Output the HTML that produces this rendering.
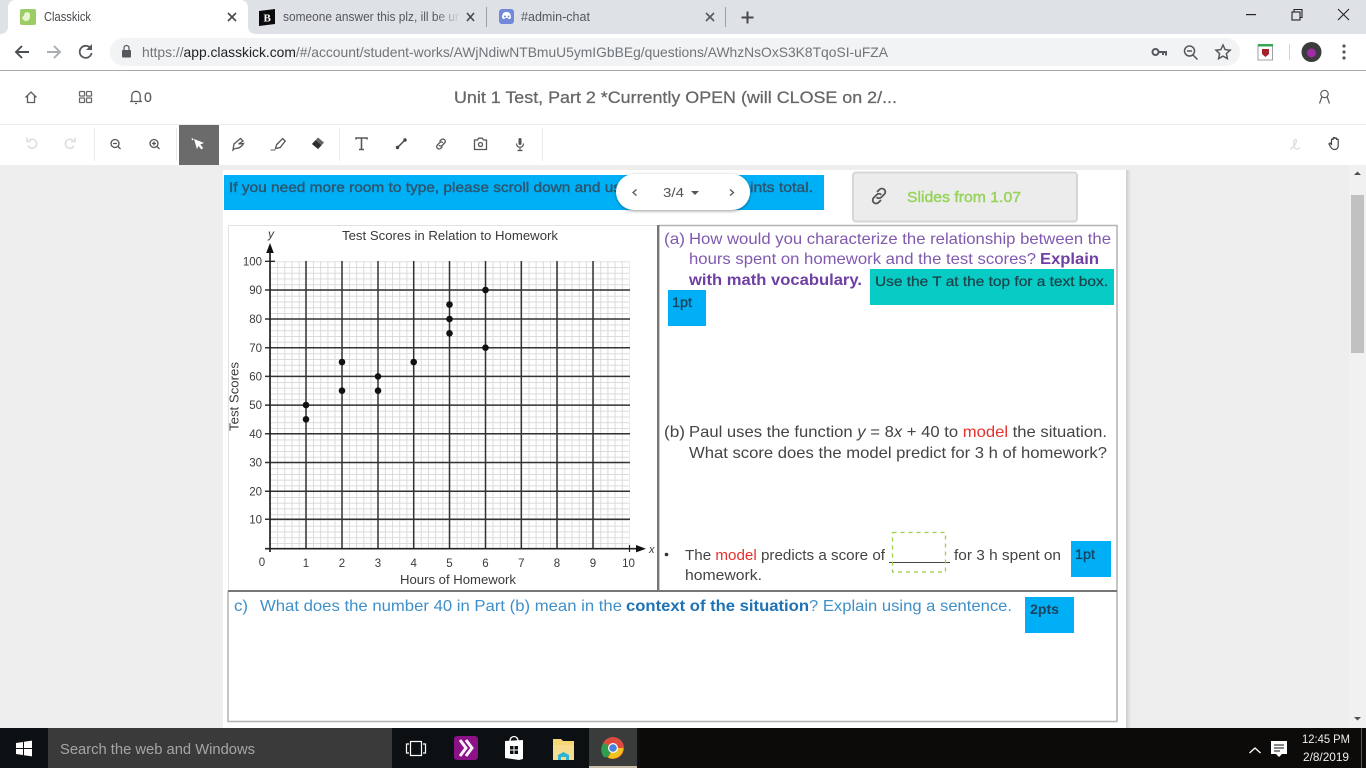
<!DOCTYPE html>
<html lang="en">
<head>
<meta charset="utf-8">
<title>Classkick</title>
<style>
html,body{margin:0;padding:0;width:1366px;height:768px;overflow:hidden;background:#eee}
svg{position:absolute;left:0;top:0;display:block;filter:blur(.3px)}
text{font-family:"Liberation Sans",sans-serif}
</style>
</head>
<body>
<svg width="1366" height="768" viewBox="0 0 1366 768" xmlns="http://www.w3.org/2000/svg">
<defs>
<pattern id="gx" x="270" y="0" width="7.18" height="10" patternUnits="userSpaceOnUse"><rect width="0.9" height="10" fill="#d8d8d8"/></pattern>
<pattern id="gy" x="0" y="261.3" width="10" height="5.748" patternUnits="userSpaceOnUse"><rect width="10" height="0.9" fill="#d8d8d8"/></pattern>
<linearGradient id="fade" x1="0" x2="1"><stop offset="0" stop-color="#dee1e6" stop-opacity="0"/><stop offset="1" stop-color="#dee1e6"/></linearGradient>
<filter id="sh" x="-10%" y="-30%" width="120%" height="170%"><feDropShadow dx="0" dy="1" stdDeviation="1.5" flood-color="#000" flood-opacity=".4"/></filter>
<linearGradient id="pshadow" x1="0" x2="1"><stop offset="0" stop-color="#ccc"/><stop offset="1" stop-color="#eee"/></linearGradient>
</defs>

<!-- Page backgrounds -->
<rect x="0" y="0" width="1366" height="768" fill="#eee"/>
<rect x="0" y="0" width="1366" height="34" fill="#dee1e6"/>
<rect x="0" y="34" width="1366" height="36" fill="#fff"/>
<rect x="0" y="70" width="1366" height="1" fill="#a9a9a9"/>
<rect x="0" y="71" width="1366" height="94" fill="#fff"/>
<rect x="0" y="124" width="1366" height="1" fill="#ececec"/>

<!-- Active tab -->
<path d="M0 34C5 34 8 31 8 27V8C8 3 11 0 16 0H240C245 0 248 3 248 8V27C248 31 251 34 256 34Z" fill="#fff"/>
<rect x="20" y="9" width="16" height="16" rx="2" fill="#9ccc65"/>
<path d="M24 16c0-2 1-4 2-4v2c0-2 2-3 2-1 1-1 2 0 2 1v3a4 4 0 0 1-8 0z" fill="#e8f5d0"/>
<text x="44" y="21" font-size="12.5" fill="#45484c" textLength="47" lengthAdjust="spacingAndGlyphs">Classkick</text>
<path d="M228 13l8 8M236 13l-8 8" stroke="#45484c" stroke-width="1.6" fill="none"/>

<!-- Tab 2 -->
<path d="M259 11l16-2v15l-16 2z" fill="#0b0b0b"/>
<text x="263.500" y="21.500" font-size="11" font-weight="bold" fill="#fff" style="font-family:'Liberation Serif',serif">B</text>
<text x="283" y="21" font-size="12.500" fill="#55585c" textLength="176" lengthAdjust="spacingAndGlyphs">someone answer this plz, ill be ur</text>
<rect x="435" y="8" width="26" height="20" fill="url(#fade)"/>
<path d="M467 13l7 8M474 13l-7 8" stroke="#45484c" stroke-width="1.6" fill="none"/>
<rect x="486" y="7" width="1" height="20" fill="#9da1a6"/>

<!-- Tab 3 -->
<rect x="499" y="9" width="15" height="15" rx="3" fill="#7289da"/>
<path d="M502 18c0-3 1-5 2-5.500 2-.6 3-.6 5 0 1 .5 2 2.500 2 5.500-1 1-2 1.200-2.500 1l-.7-1h-2.600l-.7 1c-.5.200-1.500 0-2.500-1z" fill="#fff"/>
<circle cx="505" cy="16.500" r="1" fill="#7289da"/><circle cx="508.500" cy="16.500" r="1" fill="#7289da"/>
<text x="521" y="21" font-size="12.500" fill="#55585c" textLength="69" lengthAdjust="spacingAndGlyphs">#admin-chat</text>
<path d="M706 13l8 8M714 13l-8 8" stroke="#55585c" stroke-width="1.600" fill="none"/>
<rect x="725" y="7" width="1" height="20" fill="#9da1a6"/>
<path d="M747.500 11.500v12M741.500 17.500h12" stroke="#45484c" stroke-width="2" fill="none"/>

<!-- Window controls -->
<rect x="1246" y="14" width="10" height="1.200" fill="#222"/>
<rect x="1292" y="12" width="8" height="8" fill="none" stroke="#222" stroke-width="1.100"/>
<path d="M1294 12v-2.500h8v8h-2" fill="none" stroke="#222" stroke-width="1.100"/>
<path d="M1338 9l11 11M1349 9l-11 11" stroke="#222" stroke-width="1.100" fill="none"/>

<!-- Nav -->
<path d="M29 52H16M22 46l-6 6 6 6" fill="none" stroke="#494c50" stroke-width="1.900"/>
<path d="M47 52h13M54 46l6 6-6 6" fill="none" stroke="#a9acb0" stroke-width="1.900"/>
<path d="M91 49a6 6 0 1 0 .6 4" fill="none" stroke="#55585c" stroke-width="1.800"/>
<path d="M92 44v6h-6z" fill="#55585c"/>
<rect x="110" y="38" width="1130" height="28" rx="14" fill="#f1f3f4"/>
<rect x="122" y="50" width="9" height="7.500" rx="1" fill="#55585c"/>
<path d="M124 50v-2a2.500 2.500 0 0 1 5 0v2" fill="none" stroke="#55585c" stroke-width="1.200"/>
<text x="142" y="57" font-size="14" fill="#70757a" textLength="746" lengthAdjust="spacingAndGlyphs">https://<tspan fill="#202124">app.classkick.com</tspan>/#/account/student-works/AWjNdiwNTBmuU5ymIGbBEg/questions/AWhzNsOxS3K8TqoSI-uFZA</text>

<!-- Omnibox icons -->
<circle cx="1155.500" cy="52" r="3" fill="none" stroke="#55585c" stroke-width="2"/>
<path d="M1158 52h8v3.500M1163 52v3" fill="none" stroke="#55585c" stroke-width="2"/>
<circle cx="1189.500" cy="51" r="5" fill="none" stroke="#55585c" stroke-width="1.500"/>
<path d="M1193 55l4.500 4.500M1187 51h5" stroke="#55585c" stroke-width="1.500" fill="none"/>
<path d="M1223 45l2.100 4.600 5 .6-3.700 3.400 1 5-4.400-2.500-4.400 2.500 1-5-3.700-3.400 5-.6z" fill="none" stroke="#55585c" stroke-width="1.500"/>
<rect x="1258" y="45" width="14.500" height="15" fill="#fff" stroke="#8a8a8a" stroke-width=".8"/>
<rect x="1258" y="44" width="15" height="2.500" fill="#34a853"/>
<path d="M1262 49h7v5l-3.500 3-3.500-3z" fill="#a3222b"/>
<rect x="1289" y="44" width="1" height="16" fill="#d3d3d3"/>
<circle cx="1311.500" cy="52" r="10" fill="#3c3c3e"/>
<circle cx="1311.500" cy="53" r="4.500" fill="#a32aa8"/>
<circle cx="1344" cy="46" r="1.600" fill="#55585c"/><circle cx="1344" cy="52" r="1.600" fill="#55585c"/><circle cx="1344" cy="58" r="1.600" fill="#55585c"/>

<!-- App header -->
<path d="M25.500 97.500l5.500-5.500 5.500 5.500M27.500 96v6.500h7V96" fill="none" stroke="#5c5c5c" stroke-width="1.300"/>
<g fill="none" stroke="#6a6a6a" stroke-width="1.300"><rect x="79.500" y="91.500" width="5" height="4.500" rx=".8"/><rect x="86.500" y="91.500" width="5" height="4.500" rx=".8"/><rect x="79.500" y="98" width="5" height="4.500" rx=".8"/><rect x="86.500" y="98" width="5" height="4.500" rx=".8"/></g>
<path d="M130 101.500h12M131.800 101.500v-6a4.200 4.200 0 0 1 8.400 0v6M135 103.500h2" fill="none" stroke="#5c5c5c" stroke-width="1.300"/>
<text x="144" y="102" font-size="14" fill="#5c5c5c" stroke="#5c5c5c" stroke-width=".2">0</text>
<text x="454" y="103" font-size="17" fill="#666" stroke="#666" stroke-width=".25" textLength="443" lengthAdjust="spacingAndGlyphs">Unit 1 Test, Part 2 *Currently OPEN (will CLOSE on 2/...</text>
<circle cx="1324.500" cy="94" r="3.700" fill="none" stroke="#5c5c5c" stroke-width="1.200"/>
<path d="M1319.500 103.500l2.500-7M1329.500 103.500l-2.500-7" fill="none" stroke="#5c5c5c" stroke-width="1.200"/>

<!-- Toolbar -->
<g fill="#ebebeb"><rect x="94" y="128" width="1" height="33"/><rect x="176" y="128" width="1" height="33"/><rect x="339" y="128" width="1" height="33"/><rect x="542" y="128" width="1" height="33"/></g>
<rect x="179" y="125" width="40" height="40" fill="#6b6b6b"/>
<g fill="none" stroke="#dedede" stroke-width="1.600"><path d="M29 140.500a4.500 4.500 0 1 1-1 5"/><path d="M27 137.500v4h4"/></g>
<g fill="none" stroke="#dedede" stroke-width="1.600"><path d="M73 140.500a4.500 4.500 0 1 0 1 5"/><path d="M75 137.500v4h-4"/></g>
<g fill="none" stroke="#555" stroke-width="1.300"><circle cx="115" cy="143.500" r="4"/><path d="M118 146.500l2.500 2.500M113 143.500h4"/></g>
<g fill="none" stroke="#555" stroke-width="1.300"><circle cx="154" cy="143.500" r="4"/><path d="M157 146.500l2.500 2.500M152 143.500h4M154 141.500v4"/></g>
<path d="M194 139l10 4-3.800 1.500 3 3.500-1.800 1.500-3-3.600-1.400 3.300z" fill="#fff"/>
<path d="M193 140l-1-1.500" stroke="#fff" stroke-width="1.500"/>
<path d="M233 150l1-6 6.500-5.500 2.500 2.500-4.500 3 5-.5c-2 3.500-5 5-8 5-.7 0-1.500.7-2.500 1.500z" fill="none" stroke="#555" stroke-width="1.300"/>
<path d="M275.500 148.500l1.200-4 6-6 2.500 2.500-5 6.500z" fill="none" stroke="#555" stroke-width="1.300"/>
<path d="M270.500 150h5" stroke="#777" stroke-width="1.200"/>
<path d="M312 144l6-6.500 6 5-6 6.500z" fill="#666"/>
<path d="M312 144l3.500-3.700 6 5-3.500 3.700z" fill="#2e2e2e"/>
<path d="M356 139.500v-1.500h11v1.500M361.500 138.500v11M359 149.500h5" fill="none" stroke="#5a5a5a" stroke-width="1.600"/>
<path d="M397.500 147.500l7.500-7.500" stroke="#444" stroke-width="1.400"/><circle cx="397.500" cy="147.500" r="1.700" fill="#444"/><circle cx="405" cy="140" r="1.700" fill="#444"/>
<g fill="none" stroke="#555" stroke-width="1.300"><path d="M439.500 141.500l1.800-1.800a2.300 2.300 0 0 1 3.300 3.300l-2.300 2.300a2.300 2.300 0 0 1-3.300 0"/><path d="M442.500 146.500l-1.800 1.800a2.300 2.300 0 0 1-3.300-3.300l2.300-2.300a2.300 2.300 0 0 1 3.300 0"/></g>
<g fill="none" stroke="#555" stroke-width="1.300"><path d="M474.500 140h3l1.200-1.800h3.600l1.200 1.800h3v9.500h-12z"/><circle cx="480.500" cy="144.500" r="2"/></g>
<rect x="518.500" y="138" width="3" height="7" rx="1.500" fill="#555"/>
<path d="M516.500 143.500c0 5 7 5 7 0M520 148v2.500M517.500 150.500h5" fill="none" stroke="#555" stroke-width="1.200"/>
<path d="M1290 149c3-1 6-5 6.500-8 .3-2-2-2-2.500 0-.5 3 0 7 2 8 1.500.5 3-.3 4-1.500" fill="none" stroke="#ddd" stroke-width="1.300"/>
<path d="M1331.500 145v-5c0-1.300 1.700-1.300 1.700 0v-1.500c0-1.300 1.700-1.300 1.700 0v.5c0-1.300 1.700-1.300 1.700 0v1c0-1.200 1.600-1.200 1.600 0v5.500c0 2.500-1.500 4-3.500 4s-3-.8-4-2.500l-1.500-2.500c-.6-1 .8-1.800 1.500-1z" fill="none" stroke="#444" stroke-width="1.200"/>

<!-- Paper -->
<rect x="1126" y="170" width="5" height="558" fill="url(#pshadow)"/>
<rect x="223" y="170" width="903" height="558" fill="#fff"/>

<!-- Blue banner -->
<rect x="224" y="175" width="600" height="35" fill="#00b0f6"/>
<text x="229" y="192" font-size="14" fill="#2b566f" stroke="#2b566f" stroke-width=".4" textLength="392" lengthAdjust="spacingAndGlyphs">If you need more room to type, please scroll down and us</text>
<text x="750" y="192" font-size="14" fill="#2b566f" stroke="#2b566f" stroke-width=".4" textLength="63" lengthAdjust="spacingAndGlyphs">ints total.</text>

<!-- Slides box -->
<rect x="853" y="172.500" width="224" height="49" rx="3" fill="#ececec" stroke="#d6d6d6" stroke-width="2"/>
<g fill="none" stroke="#555" stroke-width="1.800"><path d="M877 192l2.500-2.500a3.300 3.300 0 0 1 4.800 4.800l-3 3a3.300 3.300 0 0 1-4.700 0"/><path d="M881 200l-2.500 2.500a3.300 3.300 0 0 1-4.800-4.800l3-3a3.300 3.300 0 0 1 4.700 0"/></g>
<text x="907" y="202" font-size="14.500" fill="#96d35a" stroke="#96d35a" stroke-width=".4" textLength="114" lengthAdjust="spacingAndGlyphs">Slides from 1.07</text>

<!-- Question frame -->
<path d="M228 225.500H658" stroke="#e2e2e2" stroke-width="1" fill="none"/>
<path d="M228.500 225v366" stroke="#e2e2e2" stroke-width="1" fill="none"/>
<path d="M659 225.500h458v496H228V591" stroke="#b4b4b4" stroke-width="1.500" fill="none"/>
<rect x="657" y="225" width="2.400" height="366" fill="#777"/>
<rect x="228" y="590" width="889" height="2" fill="#777"/>

<!-- Graph -->
<rect x="270" y="261.300" width="359.500" height="287.400" fill="url(#gx)"/>
<rect x="270" y="261.300" width="359.500" height="287.400" fill="url(#gy)"/>
<g stroke="#333" stroke-width="1.500">
<path d="M306 261v288M342 261v288M378 261v288M413.700 261v288M449.500 261v288M485.500 261v288M521.300 261v288M557 261v288M593 261v288"/>
<path d="M265 290h365M265 319h365M265 347.700h365M265 376.400h365M265 405.100h365M265 433.800h365M265 462.500h365M265 491.200h365M265 519.200h365"/>
</g>
<path d="M265 261.300h10" stroke="#222" stroke-width="1.300"/>
<path d="M270 250v302M265 548.700h375" stroke="#222" stroke-width="1.700"/>
<path d="M629.500 545v7" stroke="#222" stroke-width="1.200"/>
<path d="M270 243l-3.800 10h7.600z" fill="#111"/>
<path d="M646 548.700l-10-3.700v7.400z" fill="#111"/>
<g fill="#111"><circle cx="306" cy="405" r="3.300"/><circle cx="306" cy="419.300" r="3.300"/><circle cx="342" cy="362" r="3.300"/><circle cx="342" cy="390.700" r="3.300"/><circle cx="378" cy="376.400" r="3.300"/><circle cx="378" cy="390.700" r="3.300"/><circle cx="413.700" cy="362" r="3.300"/><circle cx="449.500" cy="304.500" r="3.300"/><circle cx="449.500" cy="319" r="3.300"/><circle cx="449.500" cy="333.300" r="3.300"/><circle cx="485.500" cy="290" r="3.300"/><circle cx="485.500" cy="347.700" r="3.300"/></g>
<g font-size="11.500" fill="#3a3a3a">
<text x="342" y="240" font-size="12.500" textLength="216" lengthAdjust="spacingAndGlyphs">Test Scores in Relation to Homework</text>
<text x="268" y="238" font-style="italic" font-size="12">y</text>
<g text-anchor="end">
<text x="262" y="265.500">100</text><text x="262" y="294">90</text><text x="262" y="323">80</text><text x="262" y="352">70</text><text x="262" y="380.500">60</text><text x="262" y="409">50</text><text x="262" y="438">40</text><text x="262" y="466.500">30</text><text x="262" y="495.500">20</text><text x="262" y="523.500">10</text>
</g>
<g text-anchor="middle">
<text x="262" y="566">0</text><text x="306" y="567">1</text><text x="342" y="567">2</text><text x="378" y="567">3</text><text x="413.700" y="567">4</text><text x="449.500" y="567">5</text><text x="485.500" y="567">6</text><text x="521.300" y="567">7</text><text x="557" y="567">8</text><text x="593" y="567">9</text><text x="628.500" y="567">10</text>
</g>
<text x="649" y="553" font-style="italic" font-size="11">x</text>
<text x="400" y="584" font-size="12.500" textLength="116" lengthAdjust="spacingAndGlyphs">Hours of Homework</text>
<text transform="translate(238.500 431) rotate(-90)" font-size="12.500" textLength="69" lengthAdjust="spacingAndGlyphs">Test Scores</text>
</g>

<!-- Part a -->
<g font-size="16" fill="#8159ae">
<text x="664" y="244" textLength="21" lengthAdjust="spacingAndGlyphs">(a)</text>
<text x="689" y="244" textLength="422" lengthAdjust="spacingAndGlyphs">How would you characterize the relationship between the</text>
<text x="689" y="264" textLength="347" lengthAdjust="spacingAndGlyphs">hours spent on homework and the test scores?</text>
<text x="1040" y="264" font-weight="bold" fill="#6f3fa3" textLength="59" lengthAdjust="spacingAndGlyphs">Explain</text>
<text x="689" y="285" font-weight="bold" fill="#6f3fa3" textLength="173" lengthAdjust="spacingAndGlyphs">with math vocabulary.</text>
</g>
<rect x="870" y="269" width="244" height="36" fill="#09cbc6"/>
<text x="875" y="286" font-size="14" fill="#1a454b" stroke="#1a454b" stroke-width=".25" textLength="233" lengthAdjust="spacingAndGlyphs">Use the T at the top for a text box.</text>
<rect x="668" y="290" width="38" height="36" fill="#00aff5"/>
<text x="672" y="307" font-size="13.500" fill="#18445e" stroke="#18445e" stroke-width=".35" textLength="20" lengthAdjust="spacingAndGlyphs">1pt</text>

<!-- Part b -->
<g font-size="16" fill="#444">
<text x="664" y="437" textLength="21" lengthAdjust="spacingAndGlyphs">(b)</text>
<text x="689" y="437" textLength="418" lengthAdjust="spacingAndGlyphs">Paul uses the function <tspan font-style="italic">y</tspan> = 8<tspan font-style="italic">x</tspan> + 40 to <tspan fill="#e5302c">model</tspan> the situation.</text>
<text x="689" y="458" textLength="418" lengthAdjust="spacingAndGlyphs">What score does the model predict for 3 h of homework?</text>
</g>

<!-- Bullet -->
<circle cx="666.500" cy="554.500" r="1.800" fill="#333"/>
<g font-size="14.500" fill="#444">
<text x="685" y="560" textLength="200" lengthAdjust="spacingAndGlyphs">The <tspan fill="#e5302c">model</tspan> predicts a score of</text>
<text x="954" y="560" textLength="107" lengthAdjust="spacingAndGlyphs">for 3 h spent on</text>
<text x="685" y="580" textLength="77" lengthAdjust="spacingAndGlyphs">homework.</text>
</g>
<rect x="889" y="562" width="61" height="1" fill="#444"/>
<rect x="892.500" y="532.500" width="53" height="39.500" fill="none" stroke="#9bcf4d" stroke-width="1.300" stroke-dasharray="4 4"/>
<rect x="1071" y="541" width="40" height="36" fill="#00aff5"/>
<text x="1075" y="559" font-size="13.500" fill="#18445e" stroke="#18445e" stroke-width=".35" textLength="20" lengthAdjust="spacingAndGlyphs">1pt</text>

<!-- Part c -->
<g font-size="16" fill="#3f8fc8">
<text x="234" y="611" textLength="14" lengthAdjust="spacingAndGlyphs">c)</text>
<text x="260" y="611" textLength="362" lengthAdjust="spacingAndGlyphs">What does the number 40 in Part (b) mean in the</text>
<text x="626" y="611" font-weight="bold" fill="#1f73b4" textLength="183" lengthAdjust="spacingAndGlyphs">context of the situation</text>
<text x="809" y="611" textLength="203" lengthAdjust="spacingAndGlyphs">? Explain using a sentence.</text>
</g>
<rect x="1025" y="597" width="49" height="36" fill="#00aff5"/>
<text x="1030" y="614" font-size="13.500" font-weight="bold" fill="#18445e" textLength="29" lengthAdjust="spacingAndGlyphs">2pts</text>

<!-- Slide pill -->
<rect x="616" y="174" width="134" height="36" rx="18" fill="#fff" filter="url(#sh)"/>
<path d="M636.500 189.500l-3.500 3 3.500 3" fill="none" stroke="#555" stroke-width="1.300"/>
<path d="M730 189.500l3.500 3-3.500 3" fill="none" stroke="#555" stroke-width="1.300"/>
<text x="663" y="197" font-size="12.500" fill="#555" textLength="21" lengthAdjust="spacingAndGlyphs">3/4</text>
<path d="M691 191h8l-4 4z" fill="#555"/>

<!-- Scrollbar -->
<rect x="1349" y="165" width="17" height="563" fill="#f1f1f1"/>
<rect x="1351" y="195" width="13" height="158" fill="#c1c1c1"/>
<path d="M1354 175l3.500-3.500 3.500 3.500z" fill="#505050"/>
<path d="M1354 717l3.500 3.500 3.500-3.500z" fill="#505050"/>

<!-- Taskbar -->
<rect x="0" y="728" width="1366" height="40" fill="#0c1013"/>
<rect x="640" y="728" width="726" height="40" fill="#0d0b0a"/>
<rect x="48" y="728" width="344" height="40" fill="#3a3a3a"/>
<path d="M16 743l7-1v6h-7zM24 741.800l8-1.200v7.400h-8zM16 749h7v6l-7-1zM24 749h8v7.400l-8-1.200z" fill="#fff"/>
<text x="60" y="754" font-size="14.500" fill="#a5a5a5" textLength="195" lengthAdjust="spacingAndGlyphs">Search the web and Windows</text>
<g fill="none" stroke="#fff" stroke-width="1.200"><rect x="410.500" y="741.500" width="11" height="14"/><path d="M409 744h-2.500v9h2.500M423 744h2.500v9H423"/></g>
<rect x="454" y="736" width="24" height="24" rx="3" fill="#8b1187"/>
<path d="M460 740l6 8-6 8M466 740l6 8-6 8" fill="none" stroke="#fff" stroke-width="3" opacity=".95"/>
<path d="M505 741l18-1v19l-4 1-14-2z" fill="#fff"/>
<path d="M510 741c0-6 8-6 8 0" fill="none" stroke="#fff" stroke-width="1.300"/>
<path d="M510 746h3.500v3.500H510zM514.500 746h3.500v3.500h-3.500zM510 750.500h3.500v3.500H510zM514.500 750.500h3.500v3.500h-3.500z" fill="#0c1013"/>
<path d="M553 739h8l2 2h11v19h-21z" fill="#f7d774"/>
<rect x="553" y="745" width="21" height="15" fill="#f5dc8e"/>
<path d="M558 760v-5l5.500-3 5.500 3v5h-3v-3h-5v3z" fill="#2fb4d8"/>
<rect x="589" y="728" width="48" height="40" fill="#3a3b3b"/>
<rect x="589" y="766" width="48" height="2" fill="#c9bda9"/>
<circle cx="613" cy="748" r="11" fill="#dd4b3e"/>
<path d="M613 748l-5.500 9.500L604 757a11 11 0 0 1-.5-14z" fill="#2f9e4f"/>
<path d="M613 748h10.500A11 11 0 0 1 608 757.800z" fill="#f3c21b"/>
<circle cx="613" cy="748" r="5" fill="#fff"/><circle cx="613" cy="748" r="3.800" fill="#4a80e0"/>

<!-- Tray -->
<path d="M1249.500 753l5.500-5 5.500 5" fill="none" stroke="#fff" stroke-width="1.300"/>
<path d="M1271 741h16v13h-5l-3 3-3-3h-5z" fill="#fff"/>
<path d="M1274 745h10M1274 748h10M1274 751h6" stroke="#111" stroke-width="1"/>
<text x="1302" y="743" font-size="12" fill="#eee" textLength="48" lengthAdjust="spacingAndGlyphs">12:45 PM</text>
<text x="1303" y="761" font-size="12" fill="#eee" textLength="46" lengthAdjust="spacingAndGlyphs">2/8/2019</text>
<rect x="1361" y="728" width="1" height="40" fill="#555"/>
</svg>
</body>
</html>
